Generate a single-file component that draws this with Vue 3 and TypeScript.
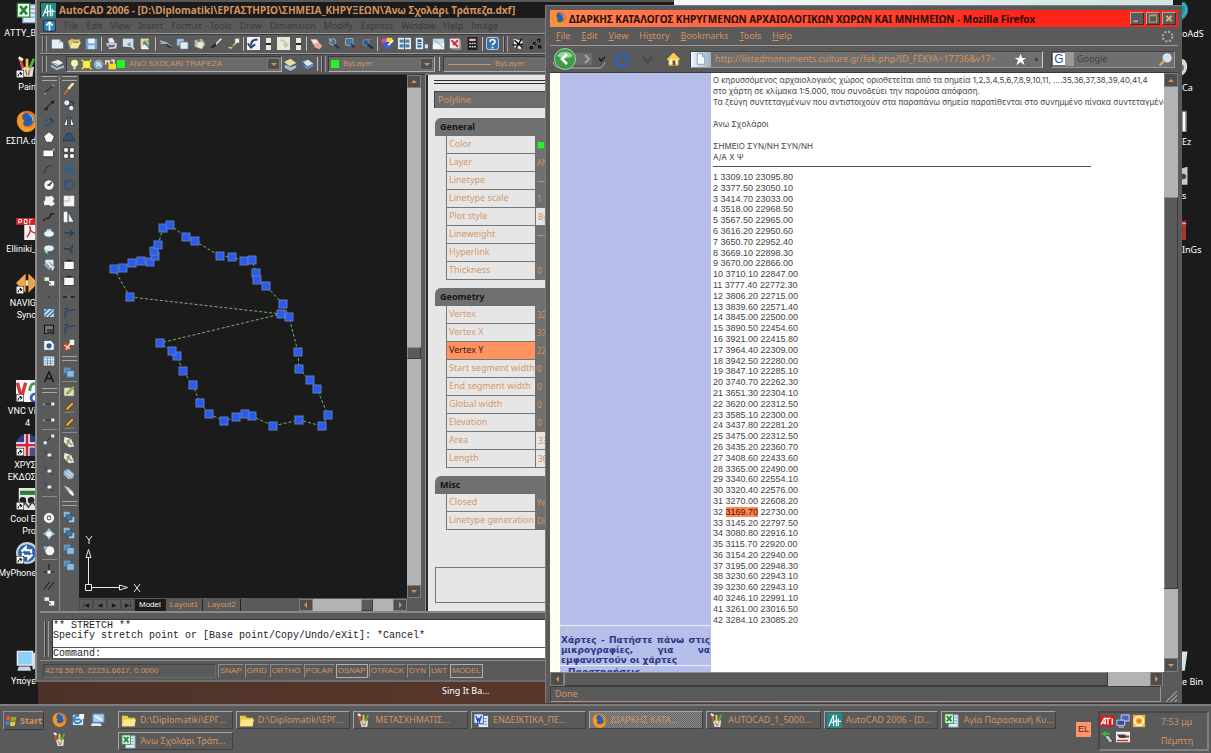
<script setup lang="ts">
import { ref } from 'vue'

type Tool = string

const ic: Record<string, string> = {
  page: '<path d="M1 3h9l5 4v7H1z" fill="#dfeef8"/><path d="M10 3v4h5" fill="#9fc0d8"/>',
  open: '<path d="M0 5l5-3 2 1h8l-2 9H2z" fill="#d8c368"/><path d="M2 14l4-8h10l-4 8z" fill="#f0e6a0"/><path d="M6 6l7 1" stroke="#6b5b1c"/>',
  save: '<path d="M1 2h14v13H1z" fill="#6f9fd8"/><path d="M4 2h8v6H4z" fill="#eef5fc"/><path d="M4 10h8v5H4z" fill="#cfe0f2"/>',
  print: '<path d="M4 2l5-1 3 5-7 1z" fill="#f0f0f4"/><path d="M1 8l9-2 5 2-1 6-9 1z" fill="#c8c8d4"/><path d="M4 10l7 2M3 13l9-3" stroke="#3a3a55"/>',
  preview: '<path d="M1 2h13v10H1z" fill="#cde1f0"/><circle cx="9" cy="9" r="3" fill="#7fa2bd" stroke="#eee"/><path d="M11 11l4 4" stroke="#ddd" stroke-width="2"/>',
  publish: '<path d="M2 2h10v10H2z" fill="#e6dc9a"/><circle cx="9" cy="8" r="4" fill="#4d8b92"/><path d="M2 13l5-4 6 6H3z" fill="#f2f2f2"/><path d="M8 4l4 5" stroke="#f0d030" stroke-width="2"/>',
  cut: '<path d="M1 5l7 2 7 5M2 8l8-1" stroke="#9fb4c4" stroke-width="2" fill="none"/><path d="M9 9l6 4" stroke="#202c38" stroke-width="2"/>',
  copy: '<path d="M1 2h9v9H1z" fill="#a9cbe6" stroke="#567"/><path d="M5 6h10v9H5z" fill="#dcecf8" stroke="#567"/>',
  paste: '<path d="M2 4l9-2 4 7-4 6-9-3z" fill="#b9b9a8"/><path d="M6 6l7 1-2 7-6-2z" fill="#ecebdc"/><circle cx="7" cy="4" r="2" fill="#777766"/>',
  brush: '<path d="M14 2L7 9" stroke="#ddd" stroke-width="2"/><path d="M7 8l-6 5 5-1z" fill="#222" stroke="#222"/>',
  brush2: '<path d="M1 13l6-3 4-5 4-1-3 4-4 3-3 4z" fill="#e0b83c"/><path d="M10 2h5v5h-5z" fill="#e8eef4"/><path d="M3 11h4" stroke="#2e55a8" stroke-width="2"/>',
  undo: '<path d="M0 0h16v16H0z" fill="#f1f2f4"/><path d="M13 3C7 3 5 6 5 10M1 8l4 5 5-4" stroke="#20406e" stroke-width="2.4" fill="none"/>',
  redo: '<path d="M0 0h16v16H0z" fill="#e9e9da"/><path d="M4 4c5 0 7 2 7 6M8 9l3 3 3-4" stroke="#c4c4b8" stroke-width="2" fill="none"/>',
  eraser: '<path d="M1 3h7l7 8-3 4-6-2z" fill="#e8a7a0"/><path d="M1 3h7l2 3-5 3z" fill="#f5dedb"/>',
  zoomp: '<circle cx="7" cy="6" r="4" fill="#54718c" stroke="#a9bccb"/><path d="M9 9l6 5" stroke="#223a55" stroke-width="2.5"/><path d="M2 2l4 3" stroke="#ddd"/>',
  zoomw: '<path d="M2 2h9v8H2z" fill="none" stroke="#b5c8d8"/><circle cx="7" cy="6" r="3.5" fill="#3c78b5"/><path d="M9 9l4 4" stroke="#223a55" stroke-width="2.5"/><path d="M11 15h4v-4z" fill="#d03020"/>',
  zoomb: '<circle cx="6" cy="7" r="4" fill="#2d5f90" stroke="#7f9fbb"/><path d="M8 9l7 5" stroke="#1d3047" stroke-width="2.5"/><path d="M8 4l6-2" stroke="#88a"/>',
  props: '<path d="M1 2h7v6H1z" fill="#d94bb0"/><path d="M7 1h7v6H7z" fill="#f0d43c"/><path d="M3 6h10l-2 8-6 1z" fill="#3b64c9"/><path d="M9 10l6-6" stroke="#fff" stroke-width="2"/>',
  dc: '<path d="M0 1h16v14H0z" fill="#e5eef6"/><path d="M2 3h5v4H2zM9 3h5v4H9zM2 9h5v4H2zM9 9h5v4H9z" fill="#4d7fb0"/><path d="M8 1v14" stroke="#333"/>',
  tp: '<path d="M1 1h9v14H1z" fill="#e5eef6"/><path d="M3 3h5v3H3zM3 7h5v2H3zM3 10h5v3H3z" fill="#2c62a0"/><path d="M12 9h4v5h-4z" fill="#cfe0ee"/>',
  sheet: '<path d="M1 2h14v13H1z" fill="#c5dbe8"/><path d="M1 9c5-4 8 3 14-3v9H1z" fill="#eef6f8"/><path d="M2 3l12 10" stroke="#7ba1b8"/>',
  markup: '<path d="M1 2h12v12H1z" fill="#f6e9ec"/><path d="M3 4l8 8M11 4l-6 6" stroke="#d42a40" stroke-width="2.4"/><path d="M14 4v11H4" stroke="#d9a0a8" fill="none"/>',
  calc: '<path d="M2 0h12v16H2z" fill="#1c1c1c"/><path d="M4 2h8v3H4z" fill="#e6b9b0"/><path d="M4 7h2v2H4zM7 7h2v2H7zM10 7h2v2h-2zM4 11h2v2H4zM7 11h2v2H7zM10 11h2v2h-2z" fill="#ddd"/>',
  help: '<rect x="0.5" y="0.5" width="15" height="15" rx="3" fill="#3573b0" stroke="#dfeaf4"/><path d="M5 6c0-4 6-4 6 0 0 2-3 2-3 4M8 12v2" stroke="#fff" stroke-width="2" fill="none"/>',
  wand: '<path d="M2 2l11 3-2 10-8-2z" fill="#eceae0"/><path d="M3 4l10 9M12 2l-7 12M1 10l12-1" stroke="#111" stroke-width="1.8"/>',
  nodes: '<path d="M1 11h4v4H1zM5 6h4v4H5zM10 2h4v4h-4zM11 10h4v4h-4z" fill="#111"/><path d="M5 11l7-7" stroke="#e8cf50" stroke-dasharray="2"/>',
  layers: '<path d="M0 5l9-3 6 4-8 4z" fill="#e7eef4"/><path d="M0 8l7 4 9-3v3l-9 3-7-4z" fill="#9db9d2"/><path d="M3 6l6 3" stroke="#6486a4"/>',
  layersY: '<path d="M0 5l8-4 7 5-8 4z" fill="#e3e0a0"/><path d="M1 8l7 3 7-2v3l-7 4-7-4z" fill="#9ec3dd"/>',
  layersB: '<path d="M1 5l8-3 6 5-7 3z" fill="#d8e6f2"/><path d="M1 9l7 5 7-4V7l-7 3z" fill="#5d8fc2"/><path d="M4 4v7l-4-3z" fill="#2a64b5"/>',
  bulb: '<circle cx="8" cy="6" r="5" fill="#fdf7b0"/><path d="M6 10h4v5H6z" fill="#d9d3b4"/>',
  sun: '<circle cx="8" cy="8" r="5.5" fill="#f8f23a"/><path d="M1 1l4 4M15 1l-4 4M1 15l4-4M15 15l-4-4" stroke="#f8f23a" stroke-width="2"/>',
  globe: '<circle cx="8" cy="8" r="7" fill="#88a8bf"/><path d="M4 5l5 2 3 5M5 11l5-6" stroke="#dfe9f0" stroke-width="2" fill="none"/>',
  lock: '<path d="M1 8V3h5v4" stroke="#eee6a0" stroke-width="2.4" fill="none"/><path d="M5 7h11v8H5z" fill="#f1d83a"/><path d="M9 2h4v5" stroke="#efe9c0" stroke-width="2.4" fill="none"/>',
  line: '<path d="M1 14L14 3" stroke="#1f3f5f" stroke-width="2"/><path d="M1 13h3v2H1zM12 2h3v2h-3z" fill="#7fa0b8"/>',
  xline: '<path d="M1 15L15 2" stroke="#1f3247" stroke-width="2"/><path d="M2 12h4v4zM10 3h4v4z" fill="#111"/>',
  pline: '<path d="M1 13h6c6 0 7-9 0-8l-4 4" stroke="#2c567c" stroke-width="2.4" fill="none"/><path d="M10 4l4 5" stroke="#24415c" stroke-width="2"/>',
  poly: '<path d="M8 1l7 6-3 8H4L1 7z" fill="#f1f7fb" stroke="#333"/>',
  rect: '<path d="M0 4h14v9H0z" fill="#fff" stroke="#1f1f1f"/><path d="M12 2h4v3h-4z" fill="#5aa"/>',
  arc: '<path d="M1 14C3 7 7 3 14 3" stroke="#24415c" stroke-width="2.4" stroke-dasharray="3 1" fill="none"/><path d="M12 2h4v3h-4z" fill="#555"/>',
  circle: '<circle cx="8" cy="8" r="7" fill="#f3f8fb" stroke="#2b2b2b"/><path d="M8 8l4-4M6 8h4" stroke="#234" stroke-width="2"/>',
  cloud: '<path d="M3 2h5l4-1 3 4-2 3 3 4-5 3-4-2-5 1-1-5 2-2z" fill="#f0f5f9"/>',
  spline: '<path d="M1 14c1-8 6-1 8-6s1-5 6-4" stroke="#222" stroke-width="2" fill="none"/>',
  ellipse: '<ellipse cx="8" cy="9" rx="7" ry="4.5" fill="#e8f3fa" stroke="#3c5b74"/><path d="M5 3h6v2H5z" fill="#d9eef8"/>',
  earc: '<ellipse cx="8" cy="7" rx="7" ry="4.500" fill="#e5f0f7" stroke="#3c5b74"/><path d="M1 10h5v5z" fill="#8fb"/>',
  insert: '<path d="M3 1h11v9H3z" fill="#dfeaf2"/><path d="M1 7l8-3 5 5-6 6z" fill="#88acc6"/><path d="M9 10l5 1-2 4M6 5l4 4" stroke="#fff" stroke-width="2" fill="none"/>',
  block: '<path d="M2 3h6v5H2z" fill="#e6efe0"/><path d="M8 8h7v6H8z" fill="#f0f6ec"/><path d="M5 8l5 4" stroke="#3a7a3a" stroke-width="2"/>',
  point: '<path d="M7 7h2v2H7z" fill="#233a55"/>',
  hatch: '<path d="M1 2h14v12H1z" fill="#c9dbe8" stroke="#2d4f6c"/><path d="M1 8l6-6M2 13L13 3M7 14l8-8" stroke="#3d6f96" stroke-width="1.5"/>',
  grad: '<path d="M2 3h12v11H2z" fill="#6d7b80" stroke="#141414" stroke-width="1.500"/><path d="M5 8h9v6H5z" fill="#3c4346"/>',
  region: '<path d="M1 2h10l4 5v8H1z" fill="#f0f6fa" stroke="#2d4f6c"/><circle cx="8" cy="9" r="3.5" fill="#2f5c86"/>',
  table: '<path d="M1 2h14v12H1z" fill="#e9f2f9"/><path d="M1 4h14M1 8h14M1 11h14M6 4v10M10 4v10" stroke="#4e88bb"/>',
  textA: '<path d="M2 15L8 1l6 14M5 10h6" stroke="#141414" stroke-width="1.8" fill="none"/>',
  dimh: '<path d="M1 8h12" stroke="#1f1f1f"/><path d="M0 7h3v3H0z" fill="#6c8fa8"/><path d="M11 6h4v4h-4z" fill="#eef"/>',
  dimd: '<path d="M2 13l11-9" stroke="#222"/><path d="M1 11h4v4H1zM11 2h4v4h-4z" fill="#e6f0f6"/>',
  dimp: '<path d="M2 3l12 11" stroke="#2f4455" stroke-width="1.5"/><path d="M6 6h5v4H6z" fill="#d7f0ee"/><path d="M2 2h3v3H2z" fill="#447"/>',
  donut: '<circle cx="8" cy="8" r="5" fill="none" stroke="#fff" stroke-width="3.500"/><circle cx="8" cy="8" r="1.8" fill="#fff"/>',
  sph: '<path d="M8 0l3 4 5 4-5 3-3 5-3-5-5-3 5-4z" fill="#9cc4dc"/><circle cx="8" cy="8" r="3.5" fill="#f2f8fb"/>',
  ball: '<circle cx="9" cy="9" r="6" fill="#f4f4f4"/><path d="M1 3h4v4H1z" fill="#8fb8cf"/>',
  perp: '<path d="M8 1v11M1 12h14" stroke="#1f1f1f" stroke-width="1.5"/><path d="M6 10h4v4H6z" fill="#fff"/>',
  par: '<path d="M1 14L9 4M7 14l8-10" stroke="#222" stroke-width="1.5"/>',
  pencil: '<path d="M14 0L7 8" stroke="#f2e8c0" stroke-width="3.5"/><path d="M7 8l-5 7" stroke="#d66a2c" stroke-width="2.5"/>',
  copyo: '<circle cx="5" cy="5" r="4" fill="#e8f0f6" stroke="#1f3347"/><circle cx="11" cy="12" r="3.5" fill="#e8f0f6" stroke="#1f3347"/><path d="M9 3c5 0 5 2 5 5" stroke="#16293c" stroke-width="1.5" fill="none"/>',
  mirror: '<path d="M6 2v12H1zM10 2v12h5z" fill="#e8f2f8" stroke="#1e3042"/>',
  offset: '<path d="M0 13c0-4 2-4 3-5s0-5 5-5 4 4 5 5 3 1 3 5z" fill="#2d5577" stroke="#18324a"/>',
  array: '<path d="M1 1h6v6H1zM9 1h6v6H9zM1 9h6v6H1zM9 9h6v6H9z" fill="#fff" stroke="#222"/>',
  move: '<path d="M8 0v16M0 8h16" stroke="#2f608c" stroke-width="3"/><path d="M5 2h6M5 14h6M2 5v6M14 5v6" stroke="#2f608c"/>',
  rotate: '<circle cx="8" cy="8" r="6" fill="none" stroke="#2d5780" stroke-width="2.4"/><path d="M2 1v6h5z" fill="#2d5780"/>',
  scale: '<path d="M1 1h14v14H1z" fill="#f0f4f7"/><path d="M8 1v7H1" stroke="#6f8797" stroke-dasharray="2 1" fill="none"/>',
  stretch: '<path d="M1 1h5v14H1z" fill="#f4f8fa"/><path d="M7 1l8 14H7z" fill="#dfeef8" stroke="#20394f"/>',
  trim: '<path d="M2 8h11M9 4l5 4-6 5" stroke="#24415c" stroke-width="2" fill="none"/>',
  extend: '<path d="M1 8h9l4-5M8 8l5 6" stroke="#24415c" stroke-width="2" fill="none"/>',
  brk: '<path d="M1 3h14v11H1z" fill="#f4f7fa" stroke="#222"/><path d="M5 1h6v2H5z" fill="#222"/>',
  join: '<path d="M0 8h6M10 8h6" stroke="#222" stroke-width="2"/><path d="M4 5l7 7M11 5l-7 7" stroke="#777"/>',
  fillet: '<path d="M3 15V9c0-3 2-5 5-5h7" stroke="#24496c" stroke-width="2" fill="none"/><path d="M1 2h6" stroke="#111" stroke-dasharray="1 1"/>',
  explode: '<path d="M1 6h9v9H1z" fill="#b5482c"/><path d="M9 1h6v7H9z" fill="#f2f2f2"/><path d="M2 8l7 5M4 14l6-8" stroke="#f5d6a8" stroke-width="2"/>',
  order: '<path d="M1 2h9v8H1z" fill="#5f93bf"/><path d="M5 6h10v9H5z" fill="#8fb9da" stroke="#35618a"/>',
  send: '<path d="M1 1h8v7H1z" fill="#8fb9da"/><path d="M8 8h7v7H8z" fill="#a9cce6"/><path d="M4 5h8v7H4z" fill="#3f76a8" stroke="#2a5580"/>',
  hpen: '<path d="M1 3h14v12H1z" fill="#dfe3c8" stroke="#454"/><path d="M14 1L6 9l-1 3 3-1 7-8z" fill="#e2c33f" stroke="#654"/>',
  ypen: '<path d="M12 1L4 9l-1 4 4-1 8-8z" fill="#d9aa38" stroke="#3d2c0a"/><path d="M2 15h13" stroke="#999"/>',
  tag: '<path d="M2 1l9 3 4 10-7 1-7-7z" fill="#dfe7ea"/><path d="M5 6l7 6M9 4l-4 8" stroke="#b58c2a" stroke-width="2"/>',
  tag2: '<path d="M1 4l6-3 8 7-2 6-6 1-6-6z" fill="#9bbcd4"/><path d="M4 6l7 6M7 4l6 6" stroke="#f2f7fa"/>',
  ebrush: '<path d="M1 2l7 3 6 6-3 4-5-6z" fill="#d8c9c2"/><path d="M9 10l5 5" stroke="#fff" stroke-width="3"/>',
  acad: '<path d="M0 0h16v16H0z" fill="#1f8d86"/><path d="M2 14L7 2v12M3 10h4M10 2v12M7 9h8M12 6v8" stroke="#fff" stroke-width="1.3" fill="none"/>',
  dwg: '<path d="M1 2h14v13H1z" fill="#2f8ac4" stroke="#123"/><path d="M8 4v10M4 8l4-4 4 4" stroke="#fff" stroke-width="2" fill="none"/>',
  ff: '<circle cx="8" cy="8" r="7.5" fill="#e8751a"/><circle cx="8" cy="7" r="4.8" fill="#2d5fa8"/><path d="M1 7C1 3 4 1 6 2 4 4 4 6 6 8c-1 1-1 3 0 4 4 2 7 0 8-4 1 5-2 8-6 8S1 12 1 7z" fill="#f39a24"/><path d="M9 3c2 0 4 3 3 5" stroke="#7fc4e8" fill="none"/>',
  folder: '<path d="M1 3h6l1 2h7v9H1z" fill="#e9c944"/><path d="M1 14l2-7h13l-2 7z" fill="#fbe98a"/>',
  excel: '<path d="M5 2h10v13H5z" fill="#dfeaf7" stroke="#8aa8c8"/><path d="M8 5h6M8 8h6M8 11h6" stroke="#88a8cc"/><path d="M1 1h9v10H1z" fill="#f2fbf0" stroke="#2f8a3a"/><path d="M3 3l5 6M8 3L3 9" stroke="#228a34" stroke-width="2"/>',
  word: '<path d="M5 3h10v12H5z" fill="#dfeaf7"/><path d="M10 6h4M10 9h4M6 12h8" stroke="#7795c5"/><path d="M0 1h10v10H0z" fill="#e9f1fc" stroke="#3561b0"/><path d="M2 3l2 6 1-4 1 4 2-6" stroke="#2450a8" stroke-width="1.5" fill="none"/>',
  paint: '<path d="M4 8h9l-1 7H6z" fill="#d9dfd2"/><path d="M5 9L3 2" stroke="#e64b3b" stroke-width="2"/><path d="M8 9V2" stroke="#e9d43c" stroke-width="2"/><path d="M10 9l3-7" stroke="#5cab4c" stroke-width="2"/><path d="M2 1l3 2" stroke="#fff" stroke-width="2"/><path d="M7 10l1 4M10 10l-1 4" stroke="#c26a3a"/>',
  mail: '<path d="M2 3h11v11H2z" fill="#cfe6f8"/><circle cx="7" cy="8" r="4" fill="none" stroke="#2f7fc4" stroke-width="2"/><path d="M9 2h5v5l-6 2z" fill="#eef6fd"/><path d="M4 8h6" stroke="#2f7fc4" stroke-width="2"/>',
  desk: '<path d="M3 2h12v9H3z" fill="#a8cef2" stroke="#5485c4"/><path d="M2 12h9l2 3H1z" fill="#dce9f7"/><path d="M5 4l8 5" stroke="#e9f5ff" stroke-width="2"/>',
  win: '<path d="M2 3c2-1 4-1 5 0L6 8C5 7 3 7 1 8z" fill="#e8562e"/><path d="M8 3c2 1 4 1 6 0l-1 5c-2 1-4 1-6 0z" fill="#7ab83a"/><path d="M1 9c2-1 4-1 5 0l-1 5c-1-1-3-1-5 0z" fill="#3f7fd6"/><path d="M7 9c2 1 4 1 6 0l-1 5c-2 1-4 1-6 0z" fill="#f4c92c"/>',
  ati: '<path d="M0 2h16v12H0z" fill="#e0181c"/><path d="M1 12l4-7h1v7M3 10h3M7 5h5M9 5v7M14 5v7" stroke="#fff" stroke-width="1.6" fill="none"/>',
  net: '<path d="M6 1h9v7H6z" fill="#4d66c4" stroke="#d6dcf2"/><path d="M1 7h9v6H1z" fill="#3a4ea8" stroke="#d6dcf2"/><path d="M3 15h6" stroke="#ddd"/>',
  disc: '<path d="M1 1h14v14H1z" fill="#f2b53a"/><circle cx="8" cy="8" r="5" fill="none" stroke="#fff6d8" stroke-width="2"/><circle cx="8" cy="8" r="2" fill="#d4742a"/>',
  usb: '<path d="M5 7l5-1 5 7-4 2z" fill="#b8bcc0" stroke="#333"/><path d="M1 4l6-3v2h4v3H7v2z" fill="#35b548"/>',
  card: '<path d="M0 2h16v12H0z" fill="#f2efe8"/><path d="M1 5h10v4H4z" fill="#3a4540"/><path d="M10 7h5M1 12h13" stroke="#c33" stroke-width="1.5"/><path d="M8 8h7" stroke="#222"/>',
  home: '<path d="M8 1L1 8h2v6h10V8h2z" fill="#fdf6d8" stroke="#caa23a"/><path d="M7 9h3v5H7z" fill="#7a4a22"/><path d="M8 1L1 8h14z" fill="#f7cf45"/>',
  reload: '<path d="M12 4a6 6 0 1 0 2 6" stroke="#2a62c8" stroke-width="2.8" fill="none"/><path d="M9 6h6V0z" fill="#2a62c8"/>',
  stop: '<path d="M3 5l5 6 5-6" stroke="#4c4c4c" stroke-width="2.5" fill="none"/>',
  star: '<path d="M8 1l2 5h5l-4 3 2 6-5-4-5 4 2-6-4-3h5z" fill="#fff"/>',
  mag: '<circle cx="10" cy="6" r="5" fill="#cfe3fa" stroke="#eef4fb"/><path d="M7 9l-6 6" stroke="#d9a878" stroke-width="3"/>',
  doc: '<path d="M3 1h7l3 3v11H3z" fill="#f4faff" stroke="#5f93c8"/><path d="M10 1v4h3" fill="#9fc4e6" stroke="#5f93c8"/>',
  throb: '<circle cx="8" cy="8" r="6" fill="none" stroke="#a5a5a5" stroke-width="2.6" stroke-dasharray="2.6 2.1"/>',
  pdf: '<path d="M6 1h10v15H6z" fill="#f4f4f4"/><path d="M0 0h14v5H0z" fill="#d0202a"/><path d="M8 14c3-4 3-6 2-8 0 4 3 5 5 5" stroke="#d0202a" fill="none"/><path d="M2 1v3M2 1h2v2H2M6 1v3h2V1zM10 1v3M10 1h2" stroke="#fff" fill="none" stroke-width=".7"/>',
  nav: '<path d="M0 8l7-7v14zM16 8L9 1v14z" fill="#f0a54a"/><path d="M7 6h2v4H7z" fill="#ffe2b5"/>',
  vnc: '<path d="M0 0h16v16H0z" fill="#f6f6f6"/><path d="M1 2l3 11 3-11" stroke="#d8343c" stroke-width="2.4" fill="none"/><path d="M15 3c-4-2-5 3-5 5" stroke="#3aa34a" stroke-width="2" fill="none"/><circle cx="14" cy="13" r="3" fill="none" stroke="#2c66c4" stroke-width="2"/>',
  uk: '<circle cx="8" cy="8" r="8" fill="#28408c"/><path d="M8 0v16M0 8h16" stroke="#fff" stroke-width="4"/><path d="M8 0v16M0 8h16" stroke="#d0283a" stroke-width="2"/><path d="M10 10h6v6h-6z" fill="#4a4e8c"/>',
  cool: '<path d="M2 0h14v16H2z" fill="#e2e8e2"/><path d="M3 2h12v3H3z" fill="#2c7a38"/><circle cx="5" cy="9" r="2.4" fill="#222"/><circle cx="11" cy="9" r="2.4" fill="#222"/><path d="M4 14l3-3 2 3 3-4 3 4" stroke="#444" fill="none"/>',
  sync: '<circle cx="8" cy="8" r="8" fill="#c5cfda"/><circle cx="8" cy="8" r="6.4" fill="#2c62ac"/><path d="M4 7l3-3v2h4v2M12 9l-3 3v-2H5V8" fill="none" stroke="#fff" stroke-width="1.6"/>',
  pc: '<path d="M1 1h11v10H1z" fill="#8fd0f8" stroke="#e9f1f8"/><path d="M12 2h4v12h-4z" fill="#d5dbe2"/><path d="M2 12h8l1 3H1z" fill="#c8d4e0"/>',
  shortcut: '<path d="M0 0h16v16H0z" fill="#fff" stroke="#000" stroke-width="2"/><path d="M4 13c0-5 2-6 6-6M7 4l5 3-3 4" stroke="#000" stroke-width="2" fill="none"/>',
  orb: '<path d="M0 0h2c4 4 3 10-2 13z" fill="#2c8f94"/><path d="M0 1c4 2 4 6 0 10" stroke="#4fb3e0" fill="none"/>',
  ring: '<path d="M0 2c5 1 5 10 0 12z" fill="#d8d8d8"/><path d="M0 6c2 1 2 4 0 5z" fill="#777"/>',
  sheetw: '<path d="M0 1h3v15H0z" fill="#f5f5f5" stroke="#777"/>',
  drv: '<path d="M0 3l4-1v13H0z" fill="#c9c9c9"/><circle cx="1" cy="9" r="2" fill="#444"/>',
  book: '<path d="M0 2h3v14H0z" fill="#a8382c"/><path d="M0 4h3" stroke="#e6b0a0"/>',
  bin: '<path d="M0 1h4L2 15H0z" fill="#cfe6ea"/>',
}

const leftIcons = [
  { icon: 'excel', lines: ['ΑΤΤΥ_Β'], link: false, row: 1 },
  { icon: 'paint', lines: ['Pain'], link: true, row: 2 },
  { icon: 'ff', lines: ['ΕΣΠΑ.d'], link: false, row: 3 },
  { icon: 'pdf', lines: ['Elliniki_'], link: false, row: 5 },
  { icon: 'nav', lines: ['NAVIG', 'Sync'], link: true, row: 6 },
  { icon: 'vnc', lines: ['VNC Vi', '4'], link: true, row: 8 },
  { icon: 'uk', lines: ['ΧΡΥΣ', 'ΕΚΔΟΣ'], link: true, row: 9 },
  { icon: 'cool', lines: ['Cool E', 'Pro'], link: true, row: 10 },
  { icon: 'sync', lines: ['MyPhone'], link: true, row: 11 },
  { icon: 'pc', lines: ['Υπόγε'], link: false, row: 13 },
]
const rightIcons = [
  { icon: 'orb', label: 'oAdS', row: 1 },
  { icon: 'ring', label: 'Ca', row: 2 },
  { icon: 'sheetw', label: 'Ez', row: 3 },
  { icon: 'drv', label: 's', row: 4 },
  { icon: 'book', label: 'InGs', row: 5 },
  { icon: 'bin', label: 'e Bin', row: 13 },
]

const cadMenu = ['File', 'Edit', 'View', 'Insert', 'Format', 'Tools', 'Draw', 'Dimension', 'Modify', 'Express', 'Window', 'Help', 'Image']
const standardBar: Tool[] = ['page', 'open', 'save', '|', 'print', 'preview', 'publish', '|', 'cut', 'copy', 'paste', 'brush', 'brush2', '|', 'undo', 'v', 'redo', 'v', '|', 'eraser', 'zoomp', 'zoomw', 'zoomb', '|', 'props', 'dc', 'tp', 'sheet', 'markup', 'calc', '|', 'help', '=', 'wand', 'nodes', 'brush2']
const drawBar: Tool[] = ['=', 'line', 'xline', 'pline', 'poly', 'rect', 'arc', 'circle', 'cloud', 'spline', 'ellipse', 'earc', 'insert', 'block', 'point', 'hatch', 'grad', 'region', 'table', 'textA', '=', 'dimh', 'dimh', '|', 'dimd', 'dimp', 'dimp', 'dimp', '|', 'gap', 'donut', 'sph', 'ball', '|', 'perp', 'par', 'block']
const modifyBar: Tool[] = ['=', 'pencil', 'copyo', 'mirror', 'offset', 'array', 'move', 'rotate', 'scale', 'stretch', 'trim', 'extend', 'brk', 'brk', 'join', 'fillet', 'fillet', 'explode', '=', 'order', '|', 'hpen', 'ypen', 'ypen', '|', 'tag', 'tag', 'tag2', 'ebrush', '=', 'send', 'send', 'order', 'order']

interface Prop { name: string; value: string; tone?: string }
const groups: { title: string; rows: Prop[] }[] = [
  {
    title: 'General',
    rows: [
      { name: 'Color', value: '■', tone: 'green' },
      { name: 'Layer', value: 'AN' },
      { name: 'Linetype', value: '—' },
      { name: 'Linetype scale', value: '1' },
      { name: 'Plot style', value: 'By', tone: 'fixed' },
      { name: 'Lineweight', value: '—' },
      { name: 'Hyperlink', value: '' },
      { name: 'Thickness', value: '0' },
    ],
  },
  {
    title: 'Geometry',
    rows: [
      { name: 'Vertex', value: '32' },
      { name: 'Vertex X', value: '37' },
      { name: 'Vertex Y', value: '22', tone: 'picked' },
      { name: 'Start segment width', value: '0' },
      { name: 'End segment width', value: '0' },
      { name: 'Global width', value: '0' },
      { name: 'Elevation', value: '0' },
      { name: 'Area', value: '33', tone: 'fixed' },
      { name: 'Length', value: '36', tone: 'fixed' },
    ],
  },
  {
    title: 'Misc',
    rows: [
      { name: 'Closed', value: 'Ye' },
      { name: 'Linetype generation', value: 'Di' },
    ],
  },
]

const vertices: [number, number][] = [
  [130, 297], [114, 269], [123, 268], [132, 263], [141, 261], [150, 262], [155, 256], [154, 251], [158, 245], [163, 228], [170, 225],
  [186, 237], [195, 241], [220, 256], [232, 257], [244, 261], [252, 260], [256, 273], [257, 280], [266, 286], [283, 304], [289, 317],
  [298, 352], [299, 369], [310, 380], [317, 389], [328, 415], [322, 426], [299, 420], [273, 426], [252, 416], [245, 414], [236, 417],
  [224, 421], [209, 414], [200, 403], [193, 385], [183, 371], [177, 356], [172, 351], [160, 343], [281, 314],
]
const outline = vertices.map((p) => p.join(',')).join(' ')

const modes = [
  { name: 'SNAP', on: false }, { name: 'GRID', on: false }, { name: 'ORTHO', on: false }, { name: 'POLAR', on: false },
  { name: 'OSNAP', on: true }, { name: 'OTRACK', on: false }, { name: 'DYN', on: false }, { name: 'LWT', on: false }, { name: 'MODEL', on: true },
]

const ffMenu = [['', 'F', 'ile'], ['', 'E', 'dit'], ['', 'V', 'iew'], ['Hi', 's', 'tory'], ['', 'B', 'ookmarks'], ['', 'T', 'ools'], ['', 'H', 'elp']]

const points = [
  '3309.10 23095.80', '3377.50 23050.10', '3414.70 23033.00', '3518.00 22968.50', '3567.50 22965.00', '3616.20 22950.60', '3650.70 22952.40',
  '3669.10 22898.30', '3670.00 22866.00', '3710.10 22847.00', '3777.40 22772.30', '3806.20 22715.00', '3839.60 22571.40', '3845.00 22500.00',
  '3890.50 22454.60', '3921.00 22415.80', '3964.40 22309.00', '3942.50 22280.00', '3847.10 22285.10', '3740.70 22262.30', '3651.30 22304.10',
  '3620.00 22312.50', '3585.10 22300.00', '3437.80 22281.20', '3475.00 22312.50', '3435.20 22360.70', '3408.60 22433.60', '3365.00 22490.00',
  '3340.60 22554.10', '3320.40 22576.00', '3270.00 22608.20', '3169.70 22730.00', '3145.20 22797.50', '3080.80 22916.10', '3115.70 22920.00',
  '3154.20 22940.00', '3195.00 22948.30', '3230.60 22943.10', '3230.60 22943.10', '3246.10 22991.10', '3261.00 23016.50', '3284.10 23085.20',
].map((s, i) => ({ n: i + 1, x: s.split(' ')[0], y: s.split(' ')[1] }))

const tasks = [
  { icon: 'folder', label: 'D:\\Diplomatiki\\ΕΡΓ...' },
  { icon: 'folder', label: 'D:\\Diplomatiki\\ΕΡΓ...' },
  { icon: 'paint', label: 'ΜΕΤΑΣΧΗΜΑΤΙΣ...' },
  { icon: 'word', label: 'ΕΝΔΕΙΚΤΙΚΑ_ΠΕ...' },
  { icon: 'ff', label: 'ΔΙΑΡΚΗΣ ΚΑΤΑ...', active: true },
  { icon: 'paint', label: 'AUTOCAD_1_5000...' },
  { icon: 'acad', label: 'AutoCAD 2006 - [D...' },
  { icon: 'excel', label: 'Αγία Παρασκευή Κυ...' },
  { icon: 'excel', label: 'Άνω Σχολάρι Τράπ...' },
]

const url = ref('http://listedmonuments.culture.gr/fek.php?ID_FEKYA=17736&v17=')
const query = ref('')
const command = ref('')
</script>

<template>
  <div class="desktop">
    <div class="wallpaper"><span>Sing It Ba...</span></div>
    <div class="strip"></div>

    <div class="icons left">
      <a v-for="d in leftIcons" :key="d.row" href="#" class="shortcut" :style="{ gridRow: d.row }">
        <span class="pic">
          <svg viewBox="0 0 16 16" class="big" v-html="ic[d.icon]" />
          <svg v-if="d.link" viewBox="0 0 16 16" class="arrow" v-html="ic.shortcut" />
        </span>
        <span v-for="l in d.lines" :key="l" :class="{ short: l.length < 2 }">{{ l }}</span>
      </a>
    </div>
    <div class="icons right">
      <a v-for="d in rightIcons" :key="d.row" href="#" class="shortcut" :style="{ gridRow: d.row }">
        <svg viewBox="0 0 16 16" class="big" v-html="ic[d.icon]" />
        <span>{{ d.label }}</span>
      </a>
    </div>

    <section class="cad">
      <header class="cad-title">
        <svg viewBox="0 0 16 16" class="i14" v-html="ic.acad" />
        <h1>AutoCAD 2006 - [D:\Diplomatiki\ΕΡΓΑΣΤΗΡΙΟ\ΣΗΜΕΙΑ_ΚΗΡΥΞΕΩΝ\Άνω Σχολάρι Τράπεζα.dxf]</h1>
      </header>
      <nav class="cad-menu">
        <svg viewBox="0 0 16 16" class="i12" v-html="ic.dwg" />
        <button v-for="m in cadMenu" :key="m">{{ m }}</button>
      </nav>
      <div class="bar">
        <span class="grip"></span>
        <template v-for="(t, i) in standardBar" :key="i">
          <span v-if="t === '|'" class="sep"></span>
          <span v-else-if="t === '='" class="grip"></span>
          <button v-else-if="t === 'v'" class="mini" aria-label="More"></button>
          <button v-else class="tool" :aria-label="t"><svg viewBox="0 0 16 16" v-html="ic[t]" /></button>
        </template>
      </div>
      <div class="bar">
        <span class="grip"></span>
        <button class="tool" aria-label="Layers"><svg viewBox="0 0 16 16" v-html="ic.layers" /></button>
        <div class="combo layer">
          <svg v-for="n in ['bulb', 'sun', 'globe', 'lock']" :key="n" viewBox="0 0 16 16" class="i11" v-html="ic[n]" />
          <i class="swatch"></i>
          <select aria-label="Layer"><option>ANO SXOLARI TRAPEZA</option></select>
          <b class="drop"></b>
        </div>
        <button class="tool" aria-label="Previous layer"><svg viewBox="0 0 16 16" v-html="ic.layersY" /></button>
        <button class="tool" aria-label="Layer states"><svg viewBox="0 0 16 16" v-html="ic.layersB" /></button>
        <span class="sep"></span><span class="grip"></span>
        <div class="combo color">
          <i class="swatch"></i>
          <select aria-label="Color"><option>ByLayer</option></select>
          <b class="drop"></b>
        </div>
        <span class="sep"></span>
        <div class="combo ltype">
          <i class="rule"></i>
          <select aria-label="Linetype"><option>ByLayer</option></select>
          <b class="drop"></b>
        </div>
      </div>

      <div class="cad-body">
        <div v-for="(bar, b) in [drawBar, modifyBar]" :key="b" class="vbar">
          <template v-for="(t, i) in bar" :key="i">
            <span v-if="t === '|'" class="hsep"></span>
            <span v-else-if="t === '='" class="hgrip"></span>
            <span v-else-if="t === 'gap'" class="hgap"></span>
            <button v-else class="vtool" :aria-label="t"><svg viewBox="0 0 16 16" v-html="ic[t]" /></button>
          </template>
        </div>

        <div class="view">
          <div class="view-main">
            <div class="canvas">
              <svg class="drawing" width="328" height="523" viewBox="79 75 328 523">
                <polygon :points="outline" fill="none" stroke="#7fae74" stroke-dasharray="3 2" />
                <rect v-for="(p, i) in vertices" :key="i" :x="p[0] - 4" :y="p[1] - 4" width="8" height="8" fill="#2b5bea" stroke="#5f7fc8" stroke-width="1" />
                <g fill="none" stroke="#e8e8e8">
                  <path d="M85.500 584.500h6v6h-6zM88.500 584V558M92 587.500h27M86 557.500h5l-2.500-8zM119.500 585v5l8-2.500z" />
                  <path d="M86 536l3 4 3-4M89 540v4M134 584l6 8M140 584l-6 8" />
                </g>
              </svg>
            </div>
            <div class="vscroll cadv"><button class="up" aria-label="Up"></button><i></i><b></b><i></i><button class="down" aria-label="Down"></button></div>
          </div>
          <div class="tabs">
            <button v-for="a in ['I◀', '◀', '▶', '▶I']" :key="a" class="step">{{ a }}</button>
            <button class="tab on">Model</button>
            <button class="tab">Layout1</button>
            <button class="tab">Layout2</button>
            <div class="hscroll cadh"><button class="prev" aria-label="Left"></button><i></i><b></b><i></i><button class="next" aria-label="Right"></button></div>
          </div>
        </div>

        <aside class="palette">
          <div class="pal-grip"></div>
          <div class="pal-type">Polyline</div>
          <table v-for="g in groups" :key="g.title">
            <thead><tr><th colspan="3">{{ g.title }}</th></tr></thead>
            <tbody>
              <tr v-for="r in g.rows" :key="r.name" :class="r.tone">
                <td class="pad"></td>
                <th scope="row">{{ r.name }}</th>
                <td class="val">{{ r.value }}</td>
              </tr>
            </tbody>
          </table>
          <div class="pal-help"></div>
        </aside>
      </div>

      <div class="cmd">
        <span class="grip"></span>
        <div class="cmd-box">
          <pre>** STRETCH **
Specify stretch point or [Base point/Copy/Undo/eXit]: *Cancel*</pre>
          <label>Command:<input v-model="command" type="text" /></label>
        </div>
      </div>
      <footer class="cad-status">
        <output>4278.5876, 22231.6617, 0.0000</output>
        <button v-for="m in modes" :key="m.name" :class="{ on: m.on }">{{ m.name }}</button>
      </footer>
    </section>

    <section class="fox">
      <header class="fox-title">
        <svg viewBox="0 0 16 16" class="i14" v-html="ic.ff" />
        <h2>ΔΙΑΡΚΗΣ ΚΑΤΑΛΟΓΟΣ ΚΗΡΥΓΜΕΝΩΝ ΑΡΧΑΙΟΛΟΓΙΚΩΝ ΧΩΡΩΝ ΚΑΙ ΜΝΗΜΕΙΩΝ - Mozilla Firefox</h2>
        <button aria-label="Minimize"><svg viewBox="0 0 12 12"><path d="M2 9h5" stroke="#d9a070" stroke-width="2" /></svg></button>
        <button aria-label="Maximize"><svg viewBox="0 0 12 12"><path d="M2 3h8v7H2zM2 2h8" stroke="#d9a070" fill="none" /></svg></button>
        <button aria-label="Close"><svg viewBox="0 0 12 12"><path d="M3 3l6 6M9 3l-6 6" stroke="#e8ab78" stroke-width="2" /></svg></button>
      </header>
      <nav class="fox-menu">
        <button v-for="m in ffMenu" :key="m[2]">{{ m[0] }}<u>{{ m[1] }}</u>{{ m[2] }}</button>
        <svg viewBox="0 0 16 16" class="i12" v-html="ic.throb" />
      </nav>
      <div class="fox-nav">
        <button class="history" aria-label="Back and forward">
          <svg viewBox="0 0 56 24">
            <path d="M3 15c2 6 6 6 10 6h36c3 0 5-3 6-6" stroke="#b5b5b5" fill="none" />
            <path d="M24 6h18v12H24z" fill="#6c6c6c" />
            <circle cx="15" cy="12" r="10.500" fill="#3f9a48" stroke="#a8cfa8" />
            <path d="M7 9a9 8 0 0 1 16 0c-5 3-10 3-16 0z" fill="#9ccf9a" />
            <path d="M17 7l-5 5 5 5" stroke="#fff" stroke-width="2.600" fill="none" />
            <path d="M35 8l4 4-4 4" stroke="#a2a2a2" stroke-width="2" fill="none" />
            <path d="M49 11l2 3 4-4" stroke="#1c1c1c" stroke-width="1.500" fill="none" />
          </svg>
        </button>
        <button aria-label="Reload"><svg viewBox="0 0 16 16" v-html="ic.reload" /></button>
        <button aria-label="Stop"><svg viewBox="0 0 16 16" v-html="ic.stop" /></button>
        <button aria-label="Home"><svg viewBox="0 0 16 16" v-html="ic.home" /></button>
        <div class="url">
          <span class="site"><svg viewBox="0 0 16 16" v-html="ic.doc" /></span>
          <input v-model="url" type="text" aria-label="Address" />
          <svg viewBox="0 0 16 16" class="i12" v-html="ic.star" />
          <i class="dot"></i>
        </div>
        <div class="search">
          <span class="g">G</span><span class="gd"></span>
          <input v-model="query" type="text" placeholder="Google" aria-label="Search" />
          <svg viewBox="0 0 16 16" class="i12" v-html="ic.mag" />
        </div>
      </div>

      <div class="page-row">
        <div class="page">
          <div class="side">
            <div class="side-top"></div>
            <div class="side-maps"><i>✦</i><p>Χάρτες - Πατήστε πάνω στις μικρογραφίες, για να εμφανιστούν οι χάρτες</p></div>
            <div class="side-notes">Παρατηρήσεις</div>
          </div>
          <article>
            <div class="intro">
              <p>Ο κηρυσσόμενος αρχαιολογικός χώρος οριοθετείται από τα σημεία 1,2,3,4,5,6,7,8,9,10,11, ....35,36,37,38,39,40,41,4</p>
              <p>στο χάρτη σε κλίμακα 1:5.000, που συνοδεύει την παρούσα απόφαση.</p>
              <p>Τα ζεύγη συντεταγμένων που αντιστοιχούν στα παραπάνω σημεία παρατίθενται στο συνημμένο πίνακα συντεταγμένων .</p>
              <br />
              <p>Άνω Σχολάροι</p>
              <br />
              <p>ΣΗΜΕΙΟ ΣΥΝ/ΝΗ ΣΥΝ/ΝΗ</p>
              <p>Α/Α Χ Ψ</p>
            </div>
            <div class="hr"></div>
            <p v-for="p in points" :key="p.n">{{ p.n }} <mark v-if="p.n === 32">{{ p.x }}</mark><template v-else>{{ p.x }}</template> {{ p.y }}</p>
          </article>
        </div>
        <div class="vscroll foxv"><button class="up" aria-label="Scroll up"></button><i></i><b></b><i></i><button class="down" aria-label="Scroll down"></button></div>
      </div>
      <div class="hscroll foxh"><button class="prev" aria-label="Scroll left"></button><b></b><i></i><button class="next" aria-label="Scroll right"></button></div>
      <footer class="fox-status">
        <span>Done</span>
        <svg viewBox="0 0 12 12" class="i12"><path d="M11 1L1 11M11 5l-6 6M11 9l-2 2" stroke="#a5a5a5" /></svg>
      </footer>
    </section>

    <footer class="taskbar">
      <button class="start"><svg viewBox="0 0 16 16" class="i12" v-html="ic.win" />Start</button>
      <div class="quick">
        <button v-for="q in ['ff', 'mail', 'desk', 'paint']" :key="q" :aria-label="q"><svg viewBox="0 0 16 16" v-html="ic[q]" /></button>
      </div>
      <div class="tasks">
        <button v-for="(t, i) in tasks" :key="i" :class="{ active: t.active }">
          <svg viewBox="0 0 16 16" class="i14" v-html="ic[t.icon]" /><span>{{ t.label }}</span>
        </button>
      </div>
      <button class="lang">EL</button>
      <div class="tray">
        <div class="tray-icons">
          <svg v-for="t in ['ati', 'net', 'disc', 'usb', 'card']" :key="t" viewBox="0 0 16 16" v-html="ic[t]" />
        </div>
        <div class="clock"><time>7:53 μμ</time><span>Πέμπτη</span></div>
      </div>
    </footer>
  </div>
</template>

<style>
html, body { background: #1b1b1b; overflow: hidden; }
</style>

<style scoped>
* { box-sizing: border-box; }
.desktop {
  --ui: "Comic Sans MS", "Noto Sans", sans-serif;
  --arial: "Liberation Sans", Arial, sans-serif;
  --face: #5a5a5a;
  --hi: #9a9a9a;
  --lo: #3a3a3a;
  --orange: #d3935f;
  position: relative;
  height: 100vh;
  overflow: hidden;
  background: #1b1b1b;
  font: 9px/12px var(--ui);
  color: var(--orange);
}
button, input, select { font: inherit; color: inherit; background: none; border: 0; padding: 0; margin: 0; outline: 0; }
button { white-space: nowrap; }
svg { display: block; flex: none; }
h1, h2, p, pre { margin: 0; font-weight: inherit; }
.i11 { width: 11px; height: 11px; }
.i12 { width: 13px; height: 13px; }
.i14 { width: 15px; height: 15px; }

.wallpaper { position: absolute; left: 38px; right: 29px; bottom: 48px; height: 24px; background: linear-gradient(90deg, #4d3229, #5a382b 50%, #4a2f27); color: #fff; }
.wallpaper span { display: block; padding: 4px 0 0 404px; }
.strip { position: absolute; left: 674px; right: 38px; top: 0; height: 8px; background: linear-gradient(90deg, #f6fafa, #cfe3e0); }

.icons { position: absolute; top: 2px; display: grid; grid-auto-rows: 54px; color: #fff; }
.icons.left { left: 0; width: 36px; grid-template-columns: 36px; font-family: Roboto, "Noto Sans", sans-serif; }
.icons.right { left: calc(100% - 29px); grid-template-columns: 29px; }
.shortcut { display: flex; flex-direction: column; color: inherit; text-decoration: none; white-space: nowrap; }
.left .shortcut { align-items: flex-end; }
.short { padding-right: 6px; }
.pic { position: relative; width: 20px; height: 25px; }
.big { width: 22px; height: 22px; margin-bottom: 3px; }
.right .big { margin-bottom: 4px; }
.arrow { position: absolute; left: 0; bottom: 3px; width: 8px; height: 8px; }

.cad { position: absolute; left: 35px; top: 0; width: 639px; bottom: 71px; display: flex; flex-direction: column; background: var(--face); border-left: 2px solid #8c8c8c; border-bottom: 2px solid #6e6e6e; padding: 2px 0 0 3px; }
.cad-title { display: flex; align-items: center; gap: 3px; height: 16px; padding-left: 1px; background: #1b1b1b; }
.cad-title h1 { font-size: 10px; font-weight: 700; white-space: nowrap; }
.cad-menu { display: flex; align-items: center; gap: 8px; height: 15px; padding-left: 3px; color: #3b3b3b; }
.bar { display: flex; align-items: center; height: 20px; border-top: 1px solid var(--hi); box-shadow: inset 0 1px var(--lo); }
.bar + .bar { height: 21px; }
.grip { flex: none; width: 5px; height: 16px; margin: 0 2px; border: solid var(--hi); border-width: 0 1px; box-shadow: inset 1px 0 var(--lo); }
.sep { flex: none; width: 1px; height: 14px; margin: 0 1px; background: #bdbdbd; }
.tool { flex: none; width: 17px; height: 16px; padding: 1px; }
.tool svg { width: 13px; height: 13px; margin: auto; }
.mini { width: 5px; height: 12px; margin: 0 4px; background: linear-gradient(#e9e9df 40%, #222 40% 60%, #e9e9df 60%); }
.combo { display: flex; align-items: center; gap: 1px; height: 16px; padding: 0 1px 0 2px; background: #6a6a6a; border: 1px solid; border-color: var(--lo) #b0b0b0 #b0b0b0 var(--lo); font: 8px/12px var(--arial); }
.combo select { flex: 1; min-width: 0; appearance: none; padding-left: 3px; }
.combo.layer { width: 216px; }
.combo.color { width: 107px; margin-right: 3px; }
.combo.ltype { width: 130px; margin-left: 2px; }
.swatch { width: 8px; height: 8px; background: #25f322; }
.rule { width: 43px; height: 1px; margin-left: 2px; background: var(--orange); }
.drop { width: 13px; height: 12px; background: #4f4f4f; border: 1px solid #777; display: grid; place-items: center; }
.drop::after { content: ""; border: solid transparent; border-width: 3px 3px 0; border-top-color: var(--orange); }

.cad-body { flex: 1; min-height: 0; display: flex; border-top: 1px solid var(--lo); }
.vbar { flex: none; width: 18px; margin-right: 1px; display: flex; flex-direction: column; align-items: center; padding-top: 1px; overflow: hidden; }
.vbar + .vbar { border-left: 1px solid #8a8a8a; width: 19px; margin-right: 1px; }
.vtool { flex: none; height: 16px; width: 16px; padding: 2px; }
.vtool svg { width: 12px; height: 12px; }
.hgrip { flex: none; width: 15px; height: 5px; margin: 0 0 4px; border: solid #a8a8a8; border-width: 1px 0; }
.hgrip:not(:first-child) { margin: 3px 0; }
.hgrip:first-child { margin-bottom: 0; }
.hsep { flex: none; width: 15px; height: 1px; margin: 1px 0; background: #8a8a8a; }
.hgap { flex: none; height: 12px; }
.view { flex: none; width: 342px; display: flex; flex-direction: column; }
.view-main { flex: 1; min-height: 0; display: flex; }
.canvas { flex: 1; background: #1b1b1b; overflow: hidden; }
.vscroll, .hscroll { display: grid; background: #b3b3b3; }
.vscroll { width: 14px; }
.cadv { grid-template-rows: 13px 258fr 12fr 226fr 13px; }
.foxv { grid-template-rows: 14px 110fr 392fr 69fr 14px; }
.foxh { flex: none; grid-template-columns: 14px 544fr 42fr 13px; height: 14px; margin-right: 15px; }
.cadh { grid-template-columns: 14px 48fr 12fr 20fr 14px; flex: 1; margin: 0 14px 0 58px; height: 12px; }
.vscroll b, .hscroll b { background: var(--face); border: 1px solid; border-color: #8c8c8c var(--lo) var(--lo) #8c8c8c; }
.vscroll button, .hscroll button { display: grid; place-items: center; background: #4e4e4e; border: 1px solid #7e7e7e; }
.vscroll button::after, .hscroll button::after { content: ""; border: 3px solid transparent; }
.up::after { border-top-width: 0 !important; border-bottom-color: var(--orange) !important; }
.down::after { border-bottom-width: 0 !important; border-top-color: var(--orange) !important; }
.prev::after { border-left-width: 0 !important; border-right-color: var(--orange) !important; }
.next::after { border-right-width: 0 !important; border-left-color: var(--orange) !important; }
.tabs { display: flex; align-items: center; height: 13px; font: 8px/12px var(--arial); }
.step { width: 14px; font: 6px/10px "DejaVu Sans", sans-serif; color: #161616; border: 1px solid #484848; height: 11px; }
.tab { height: 12px; padding: 0 4px; border-right: 1px solid #222; color: var(--orange); }
.tab.on { background: #1b1b1b; color: #fff; }

.palette { flex: 1; min-width: 0; margin-left: 5px; padding: 5px 0 0 6px; background: #e6e6e6; border-left: 2px solid #2b2b2b; outline: 1px solid #888; }
.pal-grip { height: 4px; border: solid #2d2d2d; border-width: 1px 0; margin-bottom: 7px; }
.pal-type { height: 17px; margin-bottom: 10px; padding: 2px 3px; background: #6d6d6d; border: solid #444; border-width: 1px 0 0 1px; }
.palette table, .palette thead, .palette tbody { display: block; }
.palette table { margin: 0 0 8px 1px; }
.palette tr { display: grid; grid-template-columns: 11px 89px 1fr; height: 18px; }
.palette tr > * { height: 18px; padding: 0; line-height: 12px; text-align: left; white-space: nowrap; overflow: hidden; }
.palette thead tr, .palette thead th { display: block; }
.palette thead th { padding-left: 5px; background: #707070; border-top-left-radius: 6px; color: #151515; font-weight: 700; line-height: 18px; }
.palette tbody { color: #d49a6c; }
.palette tbody th { font-weight: 400; padding: 2px 0 0 2px; border: solid #777; border-width: 0 0 1px 1px; }
.palette .val { padding: 3px 2px 0; background: #707070; color: var(--orange); font-size: 8px; }
.palette .fixed .val { background: #e6e6e6; border: solid #777; border-width: 0 0 1px 1px; }
.palette .picked th { background: #ff9460; color: #3c1408; }
.palette .green .val { color: #25f322; font-size: 13px; padding: 2px; }
.pal-help { height: 36px; margin: 37px 0 0 1px; border: 1px solid #777; }

.cmd { flex: none; display: flex; height: 49px; padding: 6px 0 2px; border-top: 2px solid #888; }
.cmd .grip { height: 36px; margin: 2px 3px 0 4px; }
.cmd-box { flex: 1; background: #fff; color: #222; font: 10px/10px "Liberation Mono", "Courier New", monospace; border: solid #333; border-width: 1px 0 0 1px; }
.cmd-box pre { height: 28px; padding-top: 1px; font: inherit; border-bottom: 1px solid #555; }
.cmd-box label { display: flex; align-items: center; height: 12px; }
.cmd-box input { flex: 1; }
.cad-status { flex: none; display: flex; align-items: center; gap: 1px; height: 20px; padding-left: 3px; border-top: 1px solid #888; font: 8px/12px var(--arial); }
.cad-status output { width: 173px; height: 14px; margin-right: 1px; padding-left: 1px; border: 1px solid; border-color: #444 #6b6b6b #6b6b6b #444; }
.cad-status button { height: 14px; padding: 0 1px; border: 1px solid; border-color: #8e8e8e #555 #555 #8e8e8e; }
.cad-status .on { border-color: #b0b0b0; }

.fox { position: absolute; left: 545px; right: 29px; top: 5px; bottom: 50px; display: flex; flex-direction: column; padding: 4px 4px 0 4px; background: var(--face); border: solid #7c7c7c; border-width: 1px 0 0 1px; }
.fox-title { flex: none; display: flex; align-items: center; gap: 2px; height: 17px; padding: 0 2px; background: linear-gradient(90deg, #ff8a55, #ff4a35 45%, #ff2418 75%); color: #2a0d08; }
.fox-title h2 { flex: 1; min-width: 0; font-size: 10px; line-height: 16px; font-weight: 700; white-space: nowrap; }
.fox-title button { width: 14px; height: 13px; background: var(--face); border: 1px solid; border-color: #aaa #333 #333 #aaa; }
.fox-title button svg { width: 12px; height: 11px; }
.fox-menu { flex: none; display: flex; align-items: center; gap: 11px; height: 19px; padding: 0 4px 0 6px; border-bottom: 1px solid #999; }
.fox-menu svg { margin-left: auto; }
.fox-nav { flex: none; display: flex; align-items: center; height: 27px; padding-right: 3px; border-bottom: 1px solid var(--lo); }
.fox-nav > button { width: 26px; height: 16px; }
.fox-nav > button svg { width: 15px; height: 15px; margin: auto; }
.fox-nav > button.history { width: 56px; height: 24px; margin-right: 2px; }
.fox-nav > .history svg { width: 56px; height: 24px; }
.url, .search { display: flex; align-items: center; height: 17px; background: #6f6f6f; border: 1px solid; border-color: #444 #999 #999 #444; }
.url { flex: 1; margin: 0 8px 0 4px; padding-right: 4px; gap: 4px; border-right: 1px solid #ccc; }
.url input { flex: 1; min-width: 0; }
.site { width: 20px; height: 15px; background: linear-gradient(90deg, #f4f8fa, #9fb0bc); }
.site svg { width: 12px; height: 14px; margin: 0 auto; }
.dot { width: 3px; height: 3px; margin-left: 4px; background: #444; }
.search { width: 124px; padding: 0 2px 0 1px; }
.search input { flex: 1; min-width: 0; padding-left: 3px; }
.search input::placeholder { color: #3f3f3f; opacity: 1; }
.g { width: 12px; height: 12px; background: #fff; color: #2a4c9c; font: 12px/12px var(--arial); text-align: center; }
.gd { width: 9px; height: 14px; background: #9a9a9a; }

.page-row { flex: 1; min-height: 0; display: flex; }
.page { flex: 1; min-width: 0; display: flex; background: #fff; overflow: hidden; }
.side { flex: none; display: flex; flex-direction: column; width: 161px; border-left: 10px solid #fffef2; background: #b6beea; color: #2c3984; font: 700 9px/10px Verdana, "DejaVu Sans", sans-serif; }
.side-top { flex: 1; }
.side-maps { height: 41px; padding: 2px 1px 0; border: solid #eef0fb; border-width: 1px 0; text-align: justify; }
.side-maps i { display: block; height: 7px; line-height: 6px; padding-left: 2px; color: #d9c9a0; font-style: normal; }
.side-notes { height: 6px; padding: 1px 0 0 8px; overflow: hidden; }
article { flex: 1; min-width: 0; padding: 2px 0 0 2px; overflow: hidden; white-space: nowrap; font-family: var(--arial); font-size: 9px; line-height: 1.2; color: #444; }
.intro { font: 8px/11px Inter, var(--arial); }
.hr { width: 378px; height: 4px; margin-bottom: 5px; border-bottom: 1px solid #555; }
mark { background: #ff8450; color: #4a1408; }
.fox-status { flex: none; display: flex; align-items: flex-end; gap: 4px; height: 17px; }
.fox-status span { flex: 1; height: 16px; margin-bottom: 1px; padding: 1px 4px; border: 1px solid; border-color: #3c3c3c #999 #999 #3c3c3c; }

.taskbar { position: absolute; left: 0; right: 0; bottom: 0; height: 49px; display: flex; align-items: flex-start; padding: 5px 2px 0 3px; background: var(--face); border-top: 2px solid #7d7d7d; }
.start { display: flex; align-items: center; gap: 2px; width: 41px; height: 19px; padding-left: 1px; font-weight: 700; border: 1px solid; border-color: #8d8d8d #3a3a3a #3a3a3a #8d8d8d; }
.quick { display: grid; grid-template-columns: repeat(3, 19px); gap: 4px 0; margin-left: 6px; width: 68px; }
.quick button { height: 16px; }
.quick svg { width: 15px; height: 15px; margin: auto; }
.tasks { flex: 1; display: grid; grid-template-columns: repeat(8, minmax(0, 1fr)); gap: 3px; }
.tasks button { display: flex; align-items: center; gap: 4px; height: 18px; padding: 0 2px; border: 1px solid; border-color: #a5a5a5 #404040 #404040 #a5a5a5; overflow: hidden; text-align: left; }
.tasks span { flex: 1; min-width: 0; }
.tasks .active { background: repeating-conic-gradient(#8d8d8d 0 25%, #606060 0 50%) 0 0 / 2px 2px; }
.lang { width: 15px; height: 15px; margin: 11px 7px 0 20px; background: #ff9468; color: #5a2412; font: 9px/15px var(--arial); }
.tray { display: flex; width: 111px; height: 40px; border: 2px solid; border-color: #484848 #808080 #808080 #484848; }
.tray-icons { display: grid; grid-template-columns: repeat(3, 16px); grid-auto-rows: 16px; width: 61px; padding-top: 1px; }
.tray-icons svg { width: 14px; height: 14px; }
.clock { display: flex; flex-direction: column; gap: 7px; padding-top: 3px; }
</style>
